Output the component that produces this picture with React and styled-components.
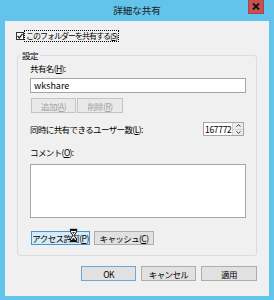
import React from 'react'
import styled, { createGlobalStyle } from 'styled-components'

const Global = createGlobalStyle`
  body {
    margin: 0;
    background: #62c4ea;
    font-family: "Noto Sans CJK JP", "Noto Sans", sans-serif;
  }
`
const Window = styled.div`
  width: 274px;
  height: 300px;
  box-sizing: border-box;
  padding: 0 5px 4px 5px;
  background: #62c4ea;
  display: flex;
  flex-direction: column;
  font-size: 8.5px;
  letter-spacing: -0.6px;
  color: #000;
`
const TitleBar = styled.div`
  height: 21px;
  display: grid;
  grid-template-columns: 1fr auto 1fr;
  align-items: start;
`
const Title = styled.div`
  grid-column: 2;
  line-height: 21px;
  font-size: 9.5px;
  letter-spacing: 0;
  color: #1a1a1a;
`
const CloseButton = styled.div`
  grid-column: 3;
  justify-self: end;
  margin-right: 5px;
  width: 16px;
  height: 14px;
  box-sizing: border-box;
  background: #c75050;
  border: 1px solid #a84545;
  border-top: none;
  display: flex;
  align-items: center;
  justify-content: center;
`
const Client = styled.div`
  flex: 1;
  background: #f0f0f0;
  padding: 10px 12px 0 11px;
  display: flex;
  flex-direction: column;
`
const CheckRow = styled.div`
  display: flex;
  align-items: center;
  height: 10px;
  gap: 1px;
`
const CheckBox = styled.span`
  width: 6px;
  height: 6px;
  border: 1px solid #333;
  background: #fff;
  display: flex;
  align-items: center;
  justify-content: center;
`
const FocusLabel = styled.span`
  outline: 1px dotted #000;
  line-height: 10px;
  padding: 0 1px;
  font-size: 8px;
  letter-spacing: -1px;
`
const GroupBox = styled.fieldset`
  margin: 8px 0 0 1px;
  border: 1px solid #dcdcdc;
  border-radius: 3px;
  padding: 1px 10px 10px 12px;
  min-width: 0;
  display: flex;
  flex-direction: column;
`
const Legend = styled.legend`
  margin-left: -10px;
  padding: 0 2px;
  line-height: 12px;
`
const Label = styled.div`
  line-height: 12px;
  margin-top: ${(p) => p.$mt || 0}px;
`
const TextInput = styled.div`
  margin-top: 4px;
  height: 15px;
  box-sizing: border-box;
  border: 1px solid #a5a5a5;
  background: #fff;
  padding-left: 3px;
  line-height: 13px;
  font-size: 9px;
  letter-spacing: 0;
`
const Row = styled.div`
  display: flex;
  align-items: center;
  gap: ${(p) => p.$gap || 0}px;
  margin-top: ${(p) => p.$mt || 0}px;
  margin-left: ${(p) => p.$ml || 0}px;
  justify-content: ${(p) => p.$justify || 'flex-start'};
`
const Button = styled.div`
  width: ${(p) => p.$w}px;
  height: ${(p) => p.$h || 15}px;
  box-sizing: border-box;
  display: flex;
  align-items: center;
  justify-content: center;
  background: ${(p) => (p.$hot ? '#d4ebf8' : p.$disabled ? '#e9e9e9' : '#e1e1e1')};
  border: 1px solid
    ${(p) => (p.$hot ? '#4d95c9' : p.$default ? '#6fa8d6' : p.$disabled ? '#c4c4c4' : '#adadad')};
  color: ${(p) => (p.$disabled ? '#a3a3a3' : '#000')};
  line-height: 12px;
`
const Spinner = styled.div`
  width: 41px;
  height: 14px;
  margin-right: 2px;
  box-sizing: border-box;
  border: 1px solid #a5a5a5;
  background: #fff;
  display: flex;
`
const SpinValue = styled.div`
  flex: 1;
  line-height: 12px;
  padding-left: 1px;
  font-size: 8.5px;
  letter-spacing: -0.3px;
  white-space: nowrap;
`
const SpinArrows = styled.div`
  width: 10px;
  flex: none;
  display: flex;
  flex-direction: column;
  border-left: 1px solid #d0d0d0;
`
const SpinArrow = styled.div`
  flex: 1;
  background: #ececec;
  display: flex;
  align-items: center;
  justify-content: center;
  & + & {
    border-top: 1px solid #d0d0d0;
  }
`
const TextArea = styled.div`
  margin-top: 6px;
  height: 54px;
  box-sizing: border-box;
  border: 1px solid #a5a5a5;
  background: #fff;
`
const AccessWrap = styled.div`
  position: relative;
`
const Cursor = styled.svg`
  position: absolute;
  left: 39px;
  top: 10px;
`

export default function App() {
  return (
    <Window>
      <Global />
      <TitleBar>
        <Title>詳細な共有</Title>
        <CloseButton>
          <svg width="8" height="7" viewBox="0 0 8 7">
            <path d="M1 0.5 L7 6.5 M7 0.5 L1 6.5" stroke="#111" strokeWidth="1.8" />
          </svg>
        </CloseButton>
      </TitleBar>
      <Client>
        <CheckRow>
          <CheckBox>
            <svg width="6" height="6" viewBox="0 0 6 6">
              <path d="M0.6 3 L2.3 4.9 L5.5 0.8" stroke="#222" strokeWidth="1.3" fill="none" />
            </svg>
          </CheckBox>
          <FocusLabel>
            このフォルダーを共有する(<u>S</u>)
          </FocusLabel>
        </CheckRow>
        <GroupBox>
          <Legend>設定</Legend>
          <Label>
            共有名(<u>H</u>):
          </Label>
          <TextInput>wkshare</TextInput>
          <Row $mt={5} $ml={1} $gap={1}>
            <Button $w={45} $disabled>
              追加(<u>A</u>)
            </Button>
            <Button $w={46} $disabled>
              削除(<u>R</u>)
            </Button>
          </Row>
          <Row $mt={9} $justify="space-between">
            <Label>
              同時に共有できるユーザー数(<u>L</u>):
            </Label>
            <Spinner>
              <SpinValue>167772</SpinValue>
              <SpinArrows>
                <SpinArrow>
                  <svg width="5" height="3" viewBox="0 0 5 3">
                    <path d="M0.5 2.7 L2.5 0.5 L4.5 2.7" stroke="#444" fill="none" />
                  </svg>
                </SpinArrow>
                <SpinArrow>
                  <svg width="5" height="3" viewBox="0 0 5 3">
                    <path d="M0.5 0.3 L2.5 2.5 L4.5 0.3" stroke="#444" fill="none" />
                  </svg>
                </SpinArrow>
              </SpinArrows>
            </Spinner>
          </Row>
          <Label $mt={10}>
            コメント(<u>O</u>):
          </Label>
          <TextArea />
          <AccessWrap>
            <Row $mt={13} $ml={1} $gap={4}>
              <Button $w={59} $h={14} $hot>
                アクセス許可(<u>P</u>)
              </Button>
              <Button $w={60} $h={14}>
                キャッシュ(<u>C</u>)
              </Button>
            </Row>
            <Cursor width="9" height="15" viewBox="0 0 9 15">
              <rect x="0.5" y="0.5" width="8" height="2" fill="#111" stroke="#fff" strokeWidth="0.5" />
              <rect x="0.5" y="12.5" width="8" height="2" fill="#111" stroke="#fff" strokeWidth="0.5" />
              <path d="M1.5 2.5 L7.5 2.5 L7.5 4 L5 7.5 L7.5 11 L7.5 12.5 L1.5 12.5 L1.5 11 L4 7.5 L1.5 4 Z" fill="#fff" stroke="#111" strokeWidth="1" />
              <path d="M2.5 12 L4.5 9.5 L6.5 12 Z" fill="#333" />
              <path d="M3 4 L6 4 L4.5 6 Z" fill="#333" />
            </Cursor>
          </AccessWrap>
        </GroupBox>
        <Row $mt={10} $gap={5} $justify="flex-end">
          <Button $w={55} $default>
            OK
          </Button>
          <Button $w={55}>キャンセル</Button>
          <Button $w={56}>適用</Button>
        </Row>
      </Client>
    </Window>
  )
}
